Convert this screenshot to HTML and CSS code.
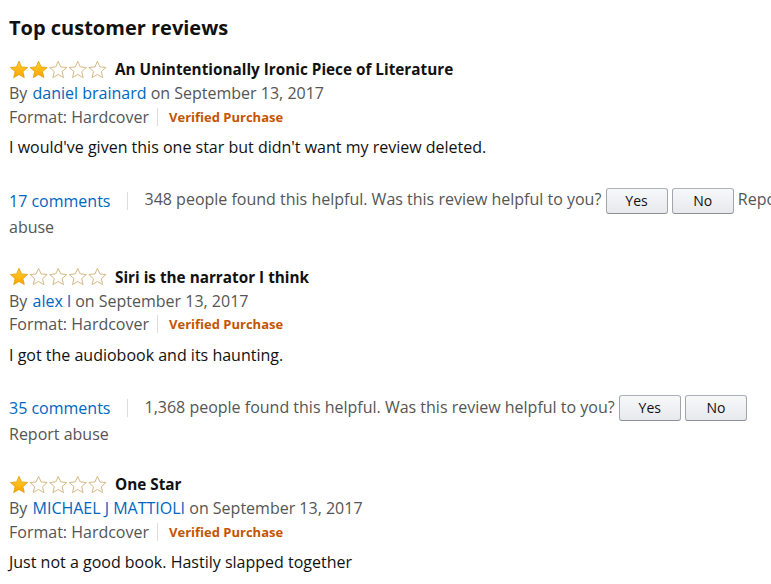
FILE: index.html
```html
<!DOCTYPE html>
<html>
<head>
<meta charset="utf-8">
<link rel="stylesheet" href="styles.css">
</head>
<body>
<svg width="0" height="0" class="defs">
  <defs>
    <linearGradient id="gold" x1="0" y1="0" x2="0" y2="1">
      <stop offset="0" stop-color="#ffd230"/>
      <stop offset="1" stop-color="#ffa200"/>
    </linearGradient>
    <path id="star" d="M10 1.3 L12.45 6.9 L18.56 7.52 L13.9 11.6 L15.29 17.58 L10 14.5 L4.71 17.58 L6.1 11.6 L1.44 7.52 L7.55 6.9 Z"/>
  </defs>
</svg>
<div class="page">
  <h2 class="heading">Top customer reviews</h2>

  <div class="review">
    <div class="title-row">
      <svg class="stars" width="100" height="19" viewBox="0 0 100 19">
        <use href="#star" x="0" class="full"/>
        <use href="#star" x="19.6" class="full"/>
        <use href="#star" x="39.2" class="empty"/>
        <use href="#star" x="58.8" class="empty"/>
        <use href="#star" x="78.4" class="empty"/>
      </svg>
      <span class="review-title">An Unintentionally Ironic Piece of Literature</span>
    </div>
    <div class="byline">By <a class="link author">daniel brainard</a> on September 13, 2017</div>
    <div class="format"><span class="fmt">Format: Hardcover</span><span class="verified">Verified Purchase</span></div>
    <div class="body">I would've given this one star but didn't want my review deleted.</div>
    <div class="actions"><a class="link comments">17 comments</a><span class="helpful">348 people found this helpful. Was this review helpful to you?</span> <span class="btn">Yes</span> <span class="btn">No</span> <span class="report">Report abuse</span></div>
  </div>

  <div class="review">
    <div class="title-row">
      <svg class="stars" width="100" height="19" viewBox="0 0 100 19">
        <use href="#star" x="0" class="full"/>
        <use href="#star" x="19.6" class="empty"/>
        <use href="#star" x="39.2" class="empty"/>
        <use href="#star" x="58.8" class="empty"/>
        <use href="#star" x="78.4" class="empty"/>
      </svg>
      <span class="review-title">Siri is the narrator I think</span>
    </div>
    <div class="byline">By <a class="link author">alex l</a> on September 13, 2017</div>
    <div class="format"><span class="fmt">Format: Hardcover</span><span class="verified">Verified Purchase</span></div>
    <div class="body">I got the audiobook and its haunting.</div>
    <div class="actions"><a class="link comments">35 comments</a><span class="helpful">1,368 people found this helpful. Was this review helpful to you?</span> <span class="btn">Yes</span> <span class="btn">No</span> <span class="report">Report abuse</span></div>
  </div>

  <div class="review">
    <div class="title-row">
      <svg class="stars" width="100" height="19" viewBox="0 0 100 19">
        <use href="#star" x="0" class="full"/>
        <use href="#star" x="19.6" class="empty"/>
        <use href="#star" x="39.2" class="empty"/>
        <use href="#star" x="58.8" class="empty"/>
        <use href="#star" x="78.4" class="empty"/>
      </svg>
      <span class="review-title">One Star</span>
    </div>
    <div class="byline">By <a class="link author">MICHAEL J MATTIOLI</a> on September 13, 2017</div>
    <div class="format"><span class="fmt">Format: Hardcover</span><span class="verified">Verified Purchase</span></div>
    <div class="body">Just not a good book. Hastily slapped together</div>
  </div>
</div>
</body>
</html>
```
FILE: styles.css
```css
html, body {
  margin: 0;
  padding: 0;
  overflow: hidden;
  background: #fff;
}
body {
  font-family: "Open Sans", "Liberation Sans", Arial, sans-serif;
  font-size: 16px;
  color: #111;
}
.defs {
  position: absolute;
  width: 0;
  height: 0;
}
.page {
  width: 790px;
  padding: 13px 0 0 9px;
}
.heading {
  margin: 0 0 14px 0;
  font-size: 20px;
  line-height: 30px;
  font-weight: 700;
}
.review {
  margin-bottom: 25px;
}
.title-row {
  display: flex;
  align-items: center;
  height: 24px;
}
.stars {
  display: block;
  margin-right: 6px;
  flex: none;
}
.stars .full {
  fill: url(#gold);
  stroke: #e29a00;
  stroke-width: 0.8;
}
.stars .empty {
  fill: #fff;
  stroke: #d6b985;
  stroke-width: 1;
}
.review-title {
  font-weight: 700;
  font-size: 15.3px;
}
.byline {
  margin-top: 1px;
  line-height: 23px;
  color: #555;
}
.format {
  height: 23px;
  display: flex;
  align-items: center;
  color: #555;
}
.link {
  color: #0066c0;
  text-decoration: none;
}
.author {
  margin-left: 1px;
  margin-right: 0;
}
.fmt {
  padding-right: 8px;
  border-right: 1px solid #ddd;
  line-height: 18px;
}
.verified {
  padding-left: 11px;
  color: #c45500;
  font-weight: 700;
  font-size: 13px;
  line-height: 18px;
}
.body {
  margin-top: 8px;
  line-height: 23px;
}
.actions {
  margin-top: 27px;
  line-height: 26px;
  color: #555;
}
.comments {
  display: inline-block;
  padding-right: 16px;
  border-right: 1px solid #ddd;
  line-height: 18px;
  vertical-align: middle;
}
.helpful {
  padding-left: 17px;
}
.btn {
  display: inline-block;
  box-sizing: border-box;
  width: 62px;
  height: 26px;
  line-height: 24px;
  text-align: center;
  font-size: 14px;
  color: #111;
  border: 1px solid #adb1b8;
  border-color: #adb1b8 #a2a6ac #8d9096;
  border-radius: 3px;
  background: linear-gradient(to bottom, #f7f8fa, #e7e9ec);
  vertical-align: middle;
}
.report {
  color: #555;
}
```
